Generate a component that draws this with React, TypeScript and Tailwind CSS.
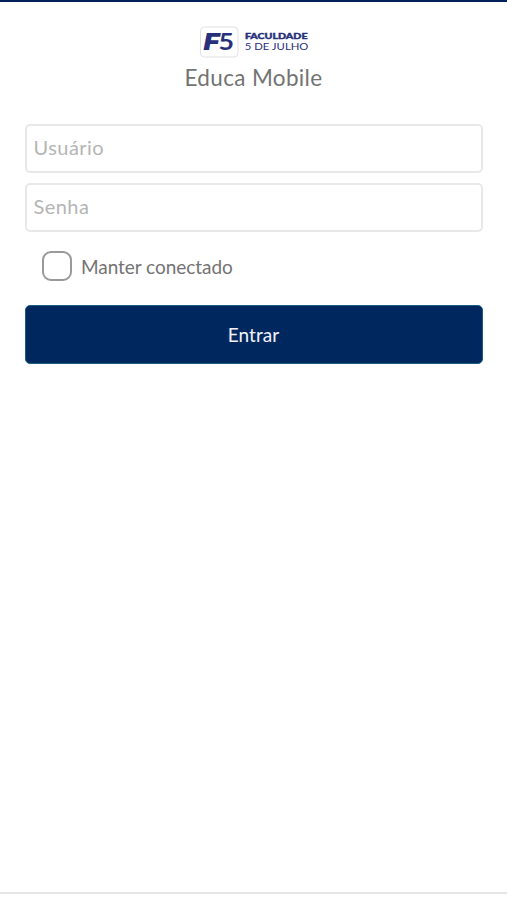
import { useState } from 'react';

interface FieldProps {
  type: string;
  placeholder: string;
  value: string;
  onChange: (value: string) => void;
}

const Logo = () => (
  <svg width="112" height="32" viewBox="0 0 112 32" className="block" fontFamily="Inter, sans-serif" fill="#27307a">
    <rect x="2.5" y="1" width="37.5" height="30" rx="4" fill="#fff" stroke="#e0e1e6" />
    <text x="5.5" y="24" fontSize="23.5" fontWeight="900" fontStyle="italic" textLength="16" lengthAdjust="spacingAndGlyphs">F</text>
    <text x="20.5" y="24" fontSize="23.5" fontWeight="700" fontFamily="Lato, sans-serif" textLength="15.5" lengthAdjust="spacingAndGlyphs">5</text>
    <text x="47" y="12.7" fontSize="8" fontWeight="900" fontFamily="Lato, sans-serif" stroke="#27307a" strokeWidth="0.4" textLength="62.5" lengthAdjust="spacingAndGlyphs">FACULDADE</text>
    <text x="46.8" y="24" fontSize="9.8" fontFamily="Lato, sans-serif" textLength="63.5" lengthAdjust="spacingAndGlyphs">5 DE JULHO</text>
  </svg>
);

const Field = ({ type, placeholder, value, onChange }: FieldProps) => (
  <input
    type={type}
    placeholder={placeholder}
    value={value}
    onChange={(e) => onChange(e.target.value)}
    className="block h-[49px] w-full rounded-[5px] border-2 border-[#e8e8e8] bg-white px-[7px] pb-[3px] text-[20px] tracking-[0.45px] text-[#6f6f6f] outline-none placeholder:text-[#b5b5b5]"
  />
);

const App = () => {
  const [user, setUser] = useState('');
  const [password, setPassword] = useState('');
  const [keepConnected, setKeepConnected] = useState(false);

  return (
    <div className="flex h-[900px] w-full flex-col border-t-2 border-[#00235a] bg-white font-[Lato,sans-serif] text-[#737373]">
      <header className="flex flex-col items-center pt-6">
        <Logo />
        <h1 className="mt-1 text-[22.5px] leading-8 tracking-[0.35px]">Educa Mobile</h1>
      </header>

      <form className="flex flex-1 flex-col px-[24.5px] pt-[30px]" onSubmit={(e) => e.preventDefault()}>
        <div className="flex flex-col gap-[10px]">
          <Field type="text" placeholder="Usuário" value={user} onChange={setUser} />
          <Field type="password" placeholder="Senha" value={password} onChange={setPassword} />
        </div>

        <label className="mt-[19px] ml-[17.5px] flex h-8 items-start gap-[9px] self-start">
          <input
            type="checkbox"
            checked={keepConnected}
            onChange={(e) => setKeepConnected(e.target.checked)}
            className="size-[30px] appearance-none rounded-[9px] border-2 border-[#999] bg-white checked:bg-[#00285f]"
          />
          <span className="text-[19px] leading-8 tracking-[-0.05px]">Manter conectado</span>
        </label>

        <button type="submit" className="mt-[22px] h-[59px] w-full rounded-[5px] border border-[#176080] bg-[#00285f] pt-0.5 text-[19px] tracking-[0.1px] text-[#f0f3fa]">
          Entrar
        </button>
      </form>

      <footer className="h-2 border-t-2 border-[#e6e6e6]" />
    </div>
  );
};

export default App;
